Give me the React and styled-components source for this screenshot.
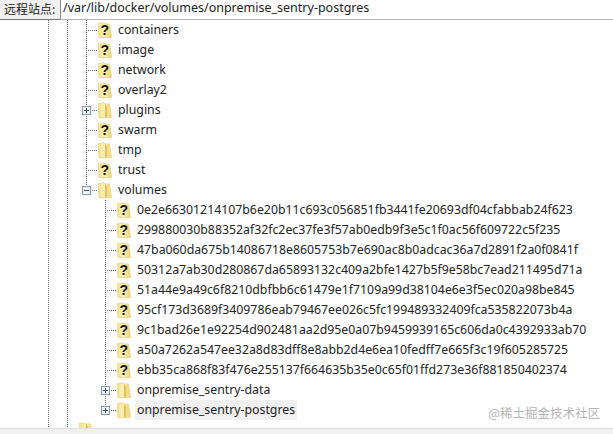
import styled, { createGlobalStyle } from "styled-components";

const GlobalStyle = createGlobalStyle`
  html, body {
    margin: 0;
    padding: 0;
    background: #fff;
  }
`;

const rows = [
  { name: "containers", guides: [1, 1, 1], unknown: true },
  { name: "image", guides: [1, 1, 1], unknown: true },
  { name: "network", guides: [1, 1, 1], unknown: true },
  { name: "overlay2", guides: [1, 1, 1], unknown: true },
  { name: "plugins", guides: [1, 1, 1], toggle: "plus" },
  { name: "swarm", guides: [1, 1, 1], unknown: true },
  { name: "tmp", guides: [1, 1, 1] },
  { name: "trust", guides: [1, 1, 1], unknown: true },
  { name: "volumes", guides: [1, 1, 1], toggle: "minus", last: true },
  { name: "0e2e66301214107b6e20b11c693c056851fb3441fe20693df04cfabbab24f623", guides: [1, 1, 0, 1], unknown: true },
  { name: "299880030b88352af32fc2ec37fe3f57ab0edb9f3e5c1f0ac56f609722c5f235", guides: [1, 1, 0, 1], unknown: true },
  { name: "47ba060da675b14086718e8605753b7e690ac8b0adcac36a7d2891f2a0f0841f", guides: [1, 1, 0, 1], unknown: true },
  { name: "50312a7ab30d280867da65893132c409a2bfe1427b5f9e58bc7ead211495d71a", guides: [1, 1, 0, 1], unknown: true },
  { name: "51a44e9a49c6f8210dbfbb6c61479e1f7109a99d38104e6e3f5ec020a98be845", guides: [1, 1, 0, 1], unknown: true },
  { name: "95cf173d3689f3409786eab79467ee026c5fc199489332409fca535822073b4a", guides: [1, 1, 0, 1], unknown: true },
  { name: "9c1bad26e1e92254d902481aa2d95e0a07b9459939165c606da0c4392933ab70", guides: [1, 1, 0, 1], unknown: true },
  { name: "a50a7262a547ee32a8d83dff8e8abb2d4e6ea10fedff7e665f3c19f605285725", guides: [1, 1, 0, 1], unknown: true },
  { name: "ebb35ca868f83f476e255137f664635b35e0c65f01ffd273e36f881850402374", guides: [1, 1, 0, 1], unknown: true },
  { name: "onpremise_sentry-data", guides: [1, 1, 0, 1], toggle: "plus" },
  { name: "onpremise_sentry-postgres", guides: [1, 1, 0, 1], toggle: "plus", selected: true, last: true },
];

const FolderIcon = ({ unknown }) => (
  <IconBox width="14" height="16" viewBox="0 0 14 16">
    <defs>
      <linearGradient id="folderBody" x1="0" y1="0" x2="1" y2="0">
        <stop offset="0" stopColor="#f5e08e" />
        <stop offset="0.4" stopColor="#fdf3b8" />
        <stop offset="1" stopColor="#f0cf70" />
      </linearGradient>
    </defs>
    <path d="M0.5 1.5 L6 1 L7 2 L11.5 2 L13.5 15.5 L1 15.5 Z" fill="url(#folderBody)" stroke="#ecd98f" strokeWidth="1" />
    {!unknown && <path d="M7 2 L9 4.5 L9 15 L7 15 Z" fill="#e2c05f" />}
    {!unknown && <path d="M9 4 L11 3 L12.6 15 L9 15 Z" fill="#f6dd8c" />}
    {unknown && (
      <text x="6.8" y="13" fontFamily="'Liberation Sans', sans-serif" fontSize="14" fontWeight="700" textAnchor="middle" fill="#111">
        ?
      </text>
    )}
  </IconBox>
);

const Toggle = ({ type }) => (
  <ToggleBox>
    <svg width="7" height="7" viewBox="0 0 7 7">
      <path d="M1 3.5h5" stroke="#3f4d6b" />
      {type === "plus" && <path d="M3.5 1v5" stroke="#3f4d6b" />}
    </svg>
  </ToggleBox>
);

export default function App() {
  return (
    <Page>
      <GlobalStyle />
      <AddressBar>
        <AddressLabel>远程站点:</AddressLabel>
        <AddressInput>/var/lib/docker/volumes/onpremise_sentry-postgres</AddressInput>
      </AddressBar>
      <Tree>
        {rows.map((row) => (
          <Row key={row.name}>
            {row.guides.slice(0, -1).map((on, i) => (
              <Guide key={i} $on={on} />
            ))}
            <Connector $last={row.last}>{row.toggle && <Toggle type={row.toggle} />}</Connector>
            <FolderIcon unknown={row.unknown} />
            <Name $selected={row.selected}>{row.name}</Name>
          </Row>
        ))}
        <Row>
          <Guide $on={1} />
          <Connector />
          <FolderIcon />
        </Row>
        <Watermark>@稀土掘金技术社区</Watermark>
      </Tree>
      <BottomBar />
    </Page>
  );
}

const Page = styled.div`
  width: 613px;
  height: 434px;
  overflow: hidden;
  display: flex;
  flex-direction: column;
  font-family: "Noto Sans", sans-serif;
  color: #222;
`;

const AddressBar = styled.div`
  height: 20px;
  flex: none;
  display: flex;
  box-sizing: border-box;
  border-bottom: 1px solid #b4b4b4;
`;

const AddressLabel = styled.div`
  width: 61px;
  flex: none;
  margin-bottom: -1px;
  padding-left: 4px;
  box-sizing: border-box;
  background: #f0f0f0;
  border-right: 1px solid #8a8a8a;
  border-bottom: 1px solid #777;
  font: 12px/17px "Noto Sans CJK SC", sans-serif;
  color: #222;
`;

const AddressInput = styled.div`
  flex: 1;
  background: #fff;
  padding-left: 2px;
  font: 12.5px/16px "Noto Sans", sans-serif;
`;

const Tree = styled.div`
  flex: 1;
  min-height: 0;
  position: relative;
  overflow: hidden;
  padding-left: 38px;
`;

const Row = styled.div`
  height: 20px;
  display: flex;
  align-items: center;
`;

const Guide = styled.div`
  width: 19px;
  height: 100%;
  flex: none;
  background: ${({ $on }) =>
    $on
      ? "repeating-linear-gradient(to bottom, #666 0 1px, transparent 1px 2px) 10px 0 / 1px 100% no-repeat"
      : "none"};
`;

const Connector = styled.div`
  width: 22px;
  height: 100%;
  flex: none;
  position: relative;
  background:
    repeating-linear-gradient(to right, #666 0 1px, transparent 1px 2px) 10px 10px / 11px 1px no-repeat,
    repeating-linear-gradient(to bottom, #666 0 1px, transparent 1px 2px) 10px 0 / 1px ${({ $last }) => ($last ? "50%" : "100%")} no-repeat;
`;

const ToggleBox = styled.div`
  position: absolute;
  left: 6px;
  top: 6px;
  width: 7px;
  height: 7px;
  border: 1px solid #8c99ad;
  background: #f1f3f8;
  display: flex;
`;

const IconBox = styled.svg`
  flex: none;
`;

const Name = styled.span`
  margin-left: 4px;
  padding: 0 2px;
  height: 20px;
  line-height: 20px;
  white-space: nowrap;
  font-size: 12.3px;
  background: ${({ $selected }) => ($selected ? "#f0f0f0" : "transparent")};
`;

const Watermark = styled.div`
  position: absolute;
  right: 13px;
  bottom: 6px;
  font: 12.5px "Noto Sans CJK SC", sans-serif;
  color: #b4b4b4;
`;

const BottomBar = styled.div`
  height: 6px;
  flex: none;
  box-sizing: border-box;
  background: #f0f0f0;
  border-top: 1px solid #e2e2e2;
`;
